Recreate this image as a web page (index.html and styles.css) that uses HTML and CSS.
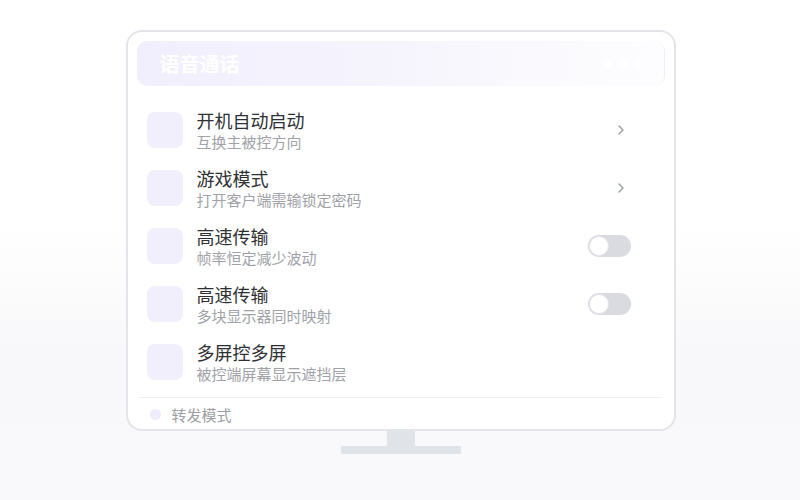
FILE: index.html
```html
<!DOCTYPE html>
<html lang="zh">
<head>
<meta charset="utf-8">
<link rel="stylesheet" href="styles.css">
</head>
<body>
<div class="stage">
  <div class="monitor">
    <div class="header">
      <span class="header-title">语音通话</span>
      <span class="header-dots"><i></i><i></i><i></i></span>
    </div>
    <div class="list">
      <div class="row">
        <div class="icon"></div>
        <div class="texts"><div class="title">开机自动启动</div><div class="sub">互换主被控方向</div></div>
        <svg class="chev" width="8" height="12" viewBox="0 0 8 12"><polyline points="2,2 6,6 2,10" fill="none" stroke="#9a9ca4" stroke-width="1.4" stroke-linecap="round" stroke-linejoin="round"/></svg>
      </div>
      <div class="row">
        <div class="icon"></div>
        <div class="texts"><div class="title">游戏模式</div><div class="sub">打开客户端需输锁定密码</div></div>
        <svg class="chev" width="8" height="12" viewBox="0 0 8 12"><polyline points="2,2 6,6 2,10" fill="none" stroke="#9a9ca4" stroke-width="1.4" stroke-linecap="round" stroke-linejoin="round"/></svg>
      </div>
      <div class="row">
        <div class="icon"></div>
        <div class="texts"><div class="title">高速传输</div><div class="sub">帧率恒定减少波动</div></div>
        <div class="toggle"><span class="knob"></span></div>
      </div>
      <div class="row">
        <div class="icon"></div>
        <div class="texts"><div class="title">高速传输</div><div class="sub">多块显示器同时映射</div></div>
        <div class="toggle"><span class="knob"></span></div>
      </div>
      <div class="row">
        <div class="icon"></div>
        <div class="texts"><div class="title">多屏控多屏</div><div class="sub">被控端屏幕显示遮挡层</div></div>
      </div>
    </div>
    <div class="footer">
      <span class="dot"></span>
      <span class="footer-text">转发模式</span>
    </div>
  </div>
  <div class="neck"></div>
  <div class="base"></div>
</div>
</body>
</html>
```
FILE: styles.css
```css
html, body {
  margin: 0;
  padding: 0;
}
body {
  width: 800px;
  height: 500px;
  overflow: hidden;
  background: linear-gradient(180deg, #ffffff 0%, #ffffff 45%, #f8f8fa 70%, #f9f9fb 100%);
  font-family: "Noto Sans CJK SC", "Noto Sans", sans-serif;
}
.stage {
  display: flex;
  flex-direction: column;
  align-items: center;
  padding-top: 30px;
  padding-left: 1px;
}
.monitor {
  width: 528px;
  height: 388px;
  border: 2px solid #e3e5ea;
  border-radius: 16px;
  background: #fff;
  padding: 9px 9px 0 9px;
  display: flex;
  flex-direction: column;
}
.header {
  flex: none;
  height: 45px;
  border-radius: 10px;
  background: linear-gradient(90deg, #f1effd 0%, #f5f4fd 45%, #fbfbfe 85%, #fdfdff 100%);
  display: flex;
  align-items: center;
  justify-content: space-between;
  padding: 0 21px 0 23px;
  border-right: 1px solid #eef0f3;
}
.header-title {
  color: #ffffff;
  font-size: 20px;
  font-weight: 700;
}
.header-dots {
  display: flex;
  gap: 5px;
}
.header-dots i {
  width: 10px;
  height: 10px;
  border-radius: 50%;
  background: #ffffff;
  opacity: 0.6;
}
.list {
  flex: none;
  margin-top: 15px;
  padding-bottom: 6px;
  border-bottom: 1px solid #eef0f3;
  margin-left: 2px;
  margin-right: 3px;
}
.row {
  height: 58px;
  display: flex;
  align-items: center;
  padding: 0 31px 0 8px;
}
.icon {
  width: 36px;
  height: 36px;
  border-radius: 8px;
  background: #f1effc;
  flex: none;
}
.texts {
  margin-left: 14px;
  flex: 1;
  display: flex;
  flex-direction: column;
}
.title {
  font-size: 18px;
  line-height: 23px;
  color: #2e3033;
}
.sub {
  font-size: 15px;
  line-height: 20px;
  color: #a0a2a8;
}
.chev {
  margin-right: 6px;
}
.toggle {
  width: 43px;
  height: 22px;
  border-radius: 11px;
  background: #d9dbe1;
  display: flex;
  align-items: center;
  padding-left: 1px;
  box-sizing: border-box;
}
.knob {
  width: 20px;
  height: 20px;
  border-radius: 50%;
  background: #fff;
  box-sizing: border-box;
  border: 1px solid #e4e6ea;
}
.footer {
  flex: none;
  height: 32px;
  display: flex;
  align-items: center;
  padding-left: 13px;
}
.dot {
  width: 11px;
  height: 11px;
  border-radius: 50%;
  background: #efecfc;
}
.footer-text {
  margin-left: 11px;
  font-size: 15px;
  color: #9c9ea4;
}
.neck {
  width: 28px;
  height: 15px;
  background: #e0e3e8;
}
.base {
  width: 120px;
  height: 8px;
  background: #e0e3e8;
}
```
